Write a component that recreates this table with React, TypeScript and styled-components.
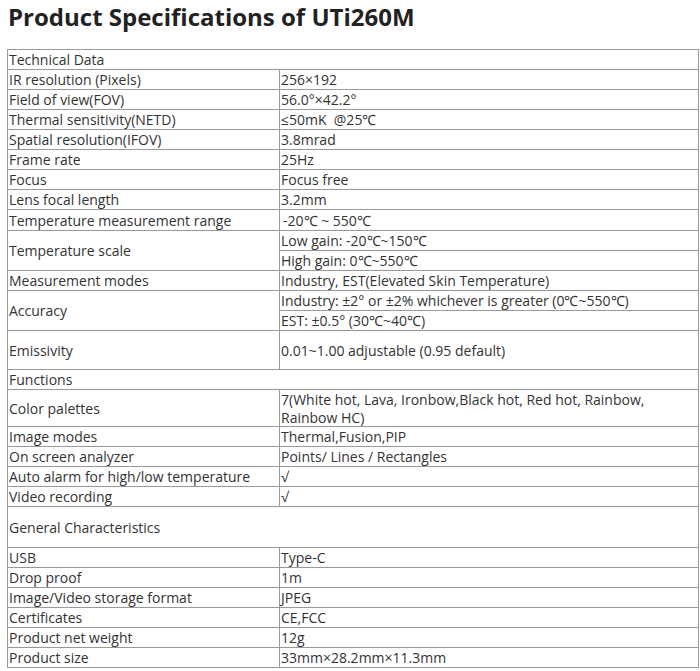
import React from "react";
import styled, { createGlobalStyle } from "styled-components";

const Global = createGlobalStyle`
  html, body { margin: 0; padding: 0; background: #fff; }
  body { font-family: "Open Sans", "Liberation Sans", sans-serif; }
`;

const Page = styled.div`
  padding: 2px 1px 0 7px;
  width: 692px;
`;

const Title = styled.h1`
  margin: 0 0 0 1px;
  font-family: "Open Sans", "Liberation Sans", sans-serif;
  font-weight: 700;
  font-size: 24px;
  line-height: 30px;
  color: #222;
  height: 47px;
`;

const Table = styled.table`
  border-collapse: collapse;
  width: 692px;
  table-layout: fixed;
  border: 1px solid #999;
  color: #333;
  font-size: 14px;
`;

const Row = styled.tr<{ $h?: number }>`
  height: ${(p) => (p.$h ? `${p.$h}px` : "20px")};
`;

const Cell = styled.td<{ $lh?: number; $indent?: boolean }>`
  border: 1px solid #999;
  padding: 1px 1px 0 1px;
  line-height: ${(p) => (p.$lh ? `${p.$lh}px` : "18px")};
  vertical-align: middle;
  white-space: pre-wrap;
  ${(p) => (p.$indent ? "padding-left: 3px;" : "")}
`;

type Spec =
  | { kind: "section"; label: string; h?: number }
  | { kind: "row"; label: string; value: string; h?: number; lh?: number; indent?: boolean }
  | { kind: "multi"; label: string; values: string[] };

const specs: Spec[] = [
  { kind: "section", label: "Technical Data" },
  { kind: "row", label: "IR resolution (Pixels)", value: "256×192" },
  { kind: "row", label: "Field of view(FOV)", value: "56.0°×42.2°" },
  { kind: "row", label: "Thermal sensitivity(NETD)", value: "≤50mK\u00a0 @25℃" },
  { kind: "row", label: "Spatial resolution(IFOV)", value: "3.8mrad" },
  { kind: "row", label: "Frame rate", value: "25Hz" },
  { kind: "row", label: "Focus", value: "Focus free" },
  { kind: "row", label: "Lens focal length", value: "3.2mm" },
  { kind: "row", label: "Temperature measurement range", value: "-20℃ ~ 550℃", h: 21, indent: true },
  { kind: "multi", label: "Temperature scale", values: ["Low gain: -20℃~150℃", "High gain: 0℃~550℃"] },
  { kind: "row", label: "Measurement modes", value: "Industry, EST(Elevated Skin Temperature)" },
  {
    kind: "multi",
    label: "Accuracy",
    values: ["Industry: ±2° or ±2% whichever is greater (0℃~550℃)", "EST: ±0.5° (30℃~40℃)"],
  },
  { kind: "row", label: "Emissivity", value: "0.01~1.00 adjustable (0.95 default)", h: 39 },
  { kind: "section", label: "Functions" },
  {
    kind: "row",
    label: "Color palettes",
    value: "7(White hot, Lava, Ironbow,Black hot, Red hot, Rainbow, Rainbow HC)",
    h: 37,
    lh: 17.5,
  },
  { kind: "row", label: "Image modes", value: "Thermal,Fusion,PIP" },
  { kind: "row", label: "On screen analyzer", value: "Points/ Lines / Rectangles" },
  { kind: "row", label: "Auto alarm for high/low temperature", value: "√" },
  { kind: "row", label: "Video recording", value: "√" },
  { kind: "section", label: "General Characteristics", h: 41 },
  { kind: "row", label: "USB", value: "Type-C" },
  { kind: "row", label: "Drop proof", value: "1m" },
  { kind: "row", label: "Image/Video storage format", value: "JPEG" },
  { kind: "row", label: "Certificates", value: "CE,FCC" },
  { kind: "row", label: "Product net weight", value: "12g" },
  { kind: "row", label: "Product size", value: "33mm×28.2mm×11.3mm" },
];

export default function App() {
  return (
    <>
      <Global />
      <Page>
        <Title>Product Specifications of UTi260M</Title>
        <Table>
          <colgroup>
            <col style={{ width: 272 }} />
            <col />
          </colgroup>
          <tbody>
            {specs.map((s, i) => {
              if (s.kind === "section") {
                return (
                  <Row key={i} $h={s.h}>
                    <Cell colSpan={2}>{s.label}</Cell>
                  </Row>
                );
              }
              if (s.kind === "multi") {
                return (
                  <React.Fragment key={i}>
                    <Row>
                      <Cell rowSpan={2}>{s.label}</Cell>
                      <Cell>{s.values[0]}</Cell>
                    </Row>
                    <Row>
                      <Cell>{s.values[1]}</Cell>
                    </Row>
                  </React.Fragment>
                );
              }
              return (
                <Row key={i} $h={s.h}>
                  <Cell>{s.label}</Cell>
                  <Cell $lh={s.lh} $indent={s.indent}>
                    {s.value}
                  </Cell>
                </Row>
              );
            })}
          </tbody>
        </Table>
      </Page>
    </>
  );
}
